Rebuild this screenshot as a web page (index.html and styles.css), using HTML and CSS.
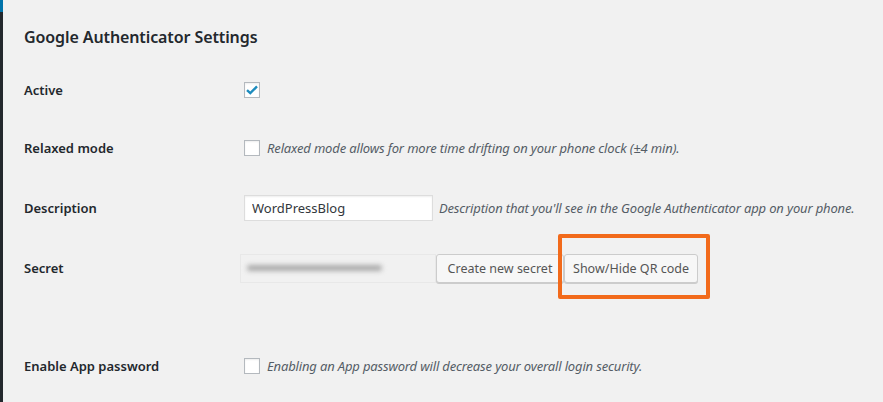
FILE: index.html
```html
<!DOCTYPE html>
<html>
    <head>
        <title>Google Authenticator Settings</title>
        <link rel="stylesheet" href="styles.css">
    </head>
    <body>
        <div id="wrap">
            <h3 class="section-title">Google Authenticator Settings</h3>
            <div class="form-table">
                <div class="row row-active">
                    <div class="label">Active</div>
                    <div class="field">
                        <span class="checkbox checked">
                            <svg width="12" height="10" viewBox="0 0 12 10"><path d="M1 5.2 L4.3 8.2 L11 1.4" fill="none" stroke="#1e8cbe" stroke-width="2.4"/></svg>
                        </span>
                    </div>
                </div>
                <div class="row">
                    <div class="label">Relaxed mode</div>
                    <div class="field">
                        <span class="checkbox"></span>
                        <span class="desc">Relaxed mode allows for more time drifting on your phone clock (±4 min).</span>
                    </div>
                </div>
                <div class="row">
                    <div class="label">Description</div>
                    <div class="field">
                        <input class="text-input" type="text" value="WordPressBlog">
                        <span class="desc">Description that you'll see in the Google Authenticator app on your phone.</span>
                    </div>
                </div>
                <div class="row">
                    <div class="label">Secret</div>
                    <div class="field">
                        <div class="secret"><span class="smudge"></span></div>
                        <button class="button btn-create">Create new secret</button>
                        <span class="highlight">
                            <button class="button btn-qr">Show/Hide QR code</button>
                        </span>
                    </div>
                </div>
                <div class="row row-app">
                    <div class="label">Enable App password</div>
                    <div class="field">
                        <span class="checkbox"></span>
                        <span class="desc">Enabling an App password will decrease your overall login security.</span>
                    </div>
                </div>
            </div>
        </div>
    </body>
</html>
```

FILE: styles.css
```css
body {
    margin: 0;
    background-color: #f1f1f1;
    font-family: "Noto Sans", "Open Sans", sans-serif;
    color: #23282d;
}

#wrap {
    height: 402px;
    border-left: 3px solid #23282d;
    padding-left: 21px;
    position: relative;
    box-sizing: border-box;
}

/* blue marker of the admin menu */
#wrap:before {
    content: "";
    position: absolute;
    left: -3px;
    top: 0;
    width: 3px;
    height: 12px;
    background-color: #0073aa;
}

.section-title {
    margin: 0;
    padding-top: 24px;
    font-size: 16px;
    font-weight: 600;
    line-height: 26px;
    letter-spacing: -0.1px;
}

.form-table {
    margin-top: 20px;
}

.row {
    display: flex;
    align-items: center;
    height: 60px;
}

.row-active {
    height: 40px;
    margin-bottom: 8px;
}

.row-app {
    margin-top: 38px;
}

.label {
    width: 220px;
    font-size: 13px;
    font-weight: 600;
}

.field {
    display: flex;
    align-items: center;
}

.checkbox {
    display: flex;
    align-items: center;
    justify-content: center;
    width: 14px;
    height: 14px;
    border: 1px solid #b4b9be;
    background-color: #fff;
    box-shadow: inset 0 1px 2px rgba(0,0,0,.07);
}

.desc {
    margin-left: 8px;
    font-size: 13px;
    font-style: italic;
    color: #555d66;
    letter-spacing: -0.15px;
}

.checkbox + .desc {
    margin-left: 7px;
}

.text-input {
    width: 189px;
    height: 26px;
    box-sizing: border-box;
    margin: 0;
    padding: 0 7px;
    border: 1px solid #ddd;
    background-color: #fff;
    font-family: "Noto Sans", sans-serif;
    font-size: 13px;
    color: #32373c;
    box-shadow: inset 0 1px 2px rgba(0,0,0,.07);
}

.text-input + .desc {
    margin-left: 6px;
}

.secret {
    width: 196px;
    height: 29px;
    margin-left: -4px;
    box-sizing: border-box;
    border: 1px solid #e8e8e8;
    display: flex;
    align-items: center;
    overflow: hidden;
}

.smudge {
    display: block;
    width: 135px;
    height: 6px;
    margin-left: 6px;
    background-color: #a9a9a9;
    border-radius: 3px;
    filter: blur(2.5px);
}

.button {
    height: 29px;
    margin: 0;
    padding: 0;
    border: 1px solid #ccc;
    border-radius: 3px;
    background-color: #f7f7f7;
    box-shadow: 0 1px 0 #ccc;
    font-family: "Noto Sans", sans-serif;
    font-size: 12.5px;
    color: #555;
}

.btn-create {
    width: 128px;
}

.btn-qr {
    width: 134px;
}

.highlight {
    position: relative;
    display: flex;
}

.highlight:after {
    content: "";
    position: absolute;
    left: -6px;
    top: -20px;
    width: 144px;
    height: 57px;
    border: 4px solid #f26a1b;
    border-radius: 2px;
}
```
